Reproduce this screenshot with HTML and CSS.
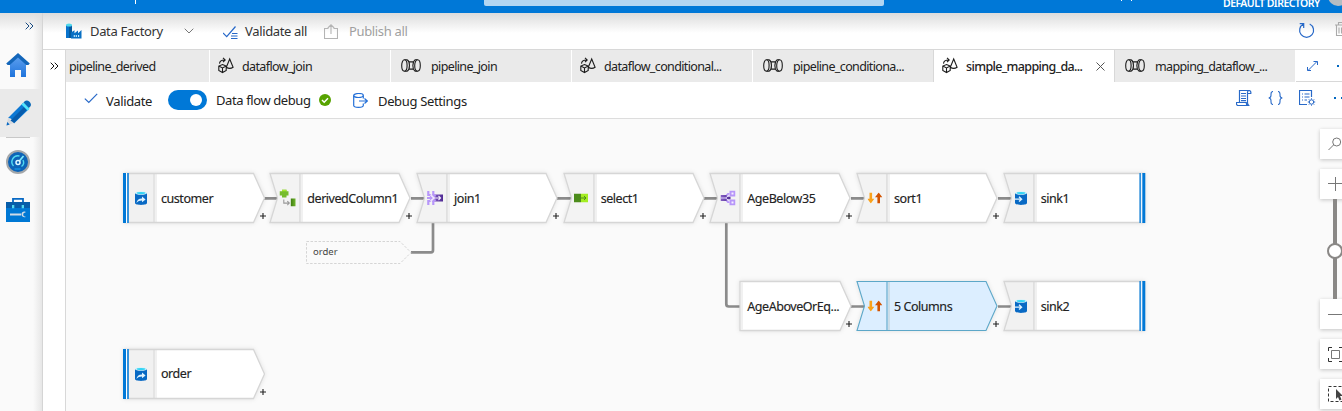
FILE: index.html
```html
<!DOCTYPE html>
<html lang="en">
<head>
<meta charset="utf-8">
<title>Data Factory</title>
<link rel="stylesheet" href="styles.css">
</head>
<body>
<svg class="defs" width="0" height="0">
  <defs>
    <linearGradient id="homeFill" x1="0" y1="0" x2="0" y2="1"><stop offset="0" stop-color="#5ea0ef"/><stop offset="1" stop-color="#1f74dc"/></linearGradient>
    <linearGradient id="leaf" x1="0" x2="1"><stop offset="0" stop-color="#3f7d10"/><stop offset="1" stop-color="#6fb52c"/></linearGradient>
    <linearGradient id="violet" x1="0" x2="1"><stop offset="0" stop-color="#8661c5"/><stop offset="1" stop-color="#4f2a93"/></linearGradient>
    <symbol id="i-chevrons" viewBox="0 0 9 8"><path d="M.7.7 4 4 .7 7.3M4.7.7 8 4 4.7 7.3" fill="none" stroke="currentColor"/></symbol>
    <symbol id="i-flow" viewBox="0 0 17 17"><path d="M5.500 7.500 9.200 9v4.500L5.500 15.500 1.800 13.500V9zM1.800 9l3.700 1.900L9.200 9M5.500 10.900v4.600M12.700 2 9.300 10.200c1.800 1.200 5 1.200 6.800 0zM2.500 6.600C2.700 3.900 4.500 3 7.600 3M6 .8 8.200 3 6 5.200" fill="none" stroke="currentColor" stroke-width="1.100"/></symbol>
    <symbol id="i-pipe" viewBox="0 0 20 13"><g fill="none" stroke="currentColor" stroke-width="1.100"><ellipse cx="3.400" cy="6.500" rx="2.700" ry="5.700"/><path d="M3.500.8h2.800M3.500 12.200h2.800"/><path d="M6.200.8c3 2 3 9.400 0 11.400M8.300 2.900h4.300M8.300 10.100h4.300M13.800.8c-2.600 2.500-2.600 8.900 0 11.400"/><path d="M13.800.8h2.700M13.800 12.200h2.700"/><ellipse cx="16.500" cy="6.500" rx="2.800" ry="5.700"/></g></symbol>
    <symbol id="i-check" viewBox="0 0 14 11"><path d="M.8 5.600 4.800 9.500 13.200.800" fill="none" stroke="currentColor" stroke-width="1.200"/></symbol>
    <symbol id="i-source" viewBox="0 0 12 14"><path d="M0 2v10c0 2.500 12 2.500 12 0V2z" fill="#0869c4"/><ellipse cx="6" cy="2" rx="6" ry="1.700" fill="#d8f3fa"/><ellipse cx="6" cy="2.100" rx="4.500" ry="1.100" fill="#32d4f5"/><path d="M1.500 12C1.800 9 3.600 7.500 7 7.400V5.600l3.600 2.900L7 11.200V9.600C4.500 9.600 3 10.400 1.500 12z" fill="#dff3ff"/></symbol>
    <symbol id="i-sink" viewBox="0 0 12 14"><path d="M0 2v10c0 2.500 12 2.500 12 0V2z" fill="#0869c4"/><ellipse cx="6" cy="2" rx="6" ry="1.700" fill="#d8f3fa"/><ellipse cx="6" cy="2.100" rx="4.500" ry="1.100" fill="#32d4f5"/><path d="M0 8.200h6M4 5.800l2.600 2.400L4 10.600" stroke="#dff3ff" stroke-width="1.300" fill="none"/></symbol>
    <symbol id="i-derive" viewBox="0 0 17 17"><path d="M2.500 0h4.500v1.700H9v4.300H7V8H2.500V6H0V1.700h2.500z" fill="#76bc2d"/><path d="M2.500 0h4.500v1.700H2.500z" fill="#a4e62d"/><path d="M4.300 10v3.600h5M7.800 11.600l2 2-2 2" fill="none" stroke="#999" stroke-width="1.100"/><path d="M11.300 9H16v8h-4.700z" fill="url(#leaf)"/></symbol>
    <symbol id="i-join" viewBox="0 0 16 15"><path d="M5 4H16v7H5L8 7.500z" fill="url(#violet)"/><path d="M1.300.5v4H3l3 3-3 3H1.300v4M6.300.5v3.500L8.500 6M6.300 14.500V11l2.200-2" fill="none" stroke="#b796f9" stroke-width="2.200"/><path d="M0 7.500h5" stroke="#b796f9" stroke-width="1.800"/><path d="m3.500 4.500 3.300 3-3.300 3M6 7.500h7.500M11.500 5.500l2 2-2 2" stroke="#f4edff" stroke-width="1.100" fill="none"/></symbol>
    <symbol id="i-select" viewBox="0 0 14 9"><path d="M0 0h7v9H0z" fill="#4c8c1b"/><path d="M7 0h7v9H7z" fill="#a4ee22"/><path d="M7 4.500h5M10 2.600l2 1.900-2 1.900" stroke="#4c8c1b" fill="none"/></symbol>
    <symbol id="i-split" viewBox="0 0 15 15"><path d="M9 3.300H7.500L5.500 5.500M5.500 9.500l2 2.200H9" fill="none" stroke="#b796f9" stroke-width="1.800"/><path d="M10 1h4v4h-4zM10 10h4v4h-4z" fill="#f5efff" stroke="#b796f9" stroke-width="2"/><path d="M0 4.500h5.500L8 6.200h2v2.600H8l-2.500 1.700H0z" fill="url(#violet)"/><path d="M0 7.500h5L9 4.500M5 7.500l4 3" stroke="#e4d7ff" fill="none"/></symbol>
    <symbol id="i-sort" viewBox="0 0 15 11"><path d="M2 0h2.600v6.200h2.200L3.300 11-.2 6.200H2z" fill="#faa21b"/><path d="M9.900 11h2.600V4.800h2.300L11.200 0 7.500 4.800h2.400z" fill="#d35400"/></symbol>
    <symbol id="i-plus" viewBox="0 0 6 6"><path d="M0 3h6M3 0v6" stroke="#222" stroke-width="1.100"/></symbol>

    <symbol id="s-mid" viewBox="0 0 143 52"><path d="M1 1.500H130L141 26 130 50.500H1L8.500 26z" fill="#fff"/><path d="M1 1.500H31v49H1L8.500 26z" fill="#f3f3f3"/><path d="M33 2v48" stroke="#f1f1f1" stroke-width="2"/><path d="M1 1.500H130L141 26 130 50.500H1L8.500 26zM31 1.500v49" fill="none" stroke="#d6d6d6" stroke-width="1.300"/></symbol>
    <symbol id="s-active" viewBox="0 0 143 52"><path d="M1 1.500H130L141 26 130 50.500H1L8.500 26z" fill="#dceeff"/><path d="M33 2v48" stroke="#cbdde9" stroke-width="2"/><path d="M1 1.500H130L141 26 130 50.500H1L8.500 26zM31 1.500v49" fill="none" stroke="#5ca7c8" stroke-width="1.100"/></symbol>
    <symbol id="s-start" viewBox="0 0 143 52"><path d="M1 1.500H130.500L141.500 26 130.500 50.500H1z" fill="#fff"/><path d="M1 1.500H30v49H1z" fill="#f1f1f1"/><path d="M33 2v48" stroke="#f1f1f1" stroke-width="2"/><path d="M1 1.500H130.500L141.500 26 130.500 50.500H1M31 1.500v49" fill="none" stroke="#d6d6d6" stroke-width="1.300"/><path d="M0 1h3v50H0z" fill="#0078d7"/><path d="M3 1h1v50H3z" fill="#fff"/><path d="M4 1h2v50H4z" fill="#3592dc"/></symbol>
    <symbol id="s-end" viewBox="0 0 143 52"><path d="M1 1.500H142v49H1L8.500 26z" fill="#fff"/><path d="M1 1.500H31v49H1L8.500 26z" fill="#f1f1f1"/><path d="M33 2v48" stroke="#f1f1f1" stroke-width="2"/><path d="M142 1.500H1L8.500 26 1 50.500H142M31 1.500v49" fill="none" stroke="#d6d6d6" stroke-width="1.300"/><path d="M136.300 1h2v50h-2z" fill="#3592dc"/><path d="M138.300 1h1v50h-1z" fill="#fff"/><path d="M139.300 1h3v50h-3z" fill="#0078d7"/></symbol>
    <symbol id="s-branch" viewBox="0 0 143 52"><path d="M31 1.500H131L142 26 131 50.500H31z" fill="#fff" stroke="#d6d6d6" stroke-width="1.300"/><path d="M33 2v48" stroke="#f1f1f1" stroke-width="2"/></symbol>
  </defs>
</svg>
<div class="app">
  <header class="topbar">
    <i class="tick tick-brand"></i><div class="search"></div><i class="tick tick-tools"></i><span class="directory">DEFAULT DIRECTORY</span><span class="avatar"></span>
  </header>
  <div class="body">
    <nav class="rail">
      <div class="rail-expand"><svg width="9" height="8"><use href="#i-chevrons"/></svg></div>
      <div class="rail-item"><svg width="24" height="24" viewBox="0 0 24 24"><path d="M4 10.500 12 3l8 7.500V24H15v-7H9v7H4z" fill="url(#homeFill)"/><path d="M12 0 .2 10.500 1.600 12 3.800 12 12 4.500 20.200 12H22.400L23.800 10.500z" fill="#1366ba"/></svg></div>
      <div class="rail-item is-current"><svg width="26" height="26" viewBox="0 0 26 26"><path d="m2 18-1.500 7.500L8 23z" fill="#d5d9de"/><path d="M.5 25.500 1.200 22 3.700 24.500z" fill="#0869c4"/><path d="M2 18 17 3l6 6L8 23.500C8 21 5 17.500 2 18z" fill="#0c78d4"/><path d="m4.500 20.500 15-15L22.500 8 8 23z" fill="#075cac"/><path d="m15.500 4.500 2-2 6.200 6.200-2 2z" fill="#50e6ff"/><path d="m17.500 2.500 1.500-1.500c1-1 3-.8 4.500.7s2 3.500.8 4.900l-1.500 1.500z" fill="#0869b8"/></svg></div>
      <div class="rail-item after-current"><svg width="24" height="24" viewBox="0 0 24 24"><circle cx="12" cy="12" r="11" fill="#0d64b7" stroke="#a4a7aa" stroke-width="2"/><path d="M13.500 6C7 4.500 3.800 12 7.500 16M17 10c1.200 2.500.5 5-1.500 6.500" fill="none" stroke="#50d8f0" stroke-width="1.400"/><path d="m12.500 12 5-6" stroke="#7ee9fa" stroke-width="1.800"/><circle cx="12" cy="12.500" r="2" fill="#0d64b7" stroke="#e0f9ff" stroke-width="1.500"/><path d="M8.500 19h6" stroke="#1590e0" stroke-width="1.500"/></svg></div>
      <div class="rail-item"><svg width="24" height="24" viewBox="0 0 24 24"><path d="M7 5V.8h10V5" fill="none" stroke="#0869c4" stroke-width="1.800"/><path d="M0 4h24v20H0z" fill="#0078d4"/><path d="M0 4h24v6H0z" fill="#075da9"/><path d="M6 7h2.300v3.300H6zM15.700 7H18v3.300h-2.300z" fill="#50d8f0"/><path d="M4 15.500h11v2H4z" fill="#d0dbe6"/><path d="M19.500 13.800c-4-1.500-6 4.500-1.200 5.500.8 0 1.200-.1 1.500-.5-1.800-.3-2.600-.8-2.600-2.300s1-2 2.300-2.100z" fill="#d0dbe6"/></svg></div>
    </nav>
    <main class="main">
      <div class="toolbar">
        <svg class="factory" width="16" height="16" viewBox="0 0 16 16"><path d="M0 2.200V15h6V2.200z" fill="#0873cc"/><path d="M3 3.500h3V15H3z" fill="#055b9f"/><ellipse cx="3" cy="2" rx="3" ry="1.600" fill="#50d9ec"/><path d="M5 15.500V9.500l3.500-2.200v3L12 7.500v2.800l3.500-3.200v8.400z" fill="#0870c4"/><path d="M8.300 12v2M10.300 12v2M12.600 12v2" stroke="#c7edff" stroke-width="1.100"/></svg>
        <span class="txt t-factory">Data Factory</span>
        <svg class="caret" width="10" height="6" viewBox="0 0 10 6"><path d="m.7.700 4.300 4.300L9.300.700" fill="none" stroke="#777"/></svg>
        <svg class="validate-all" width="15" height="13" viewBox="0 0 15 13"><path d="m0 7 3.700 3.700L12.500.500" fill="none" stroke="#2768c8" stroke-width="1.200"/><path d="M9 7.500h5.500M8 10h6.500M8 12.500h6.500" stroke="#2768c8"/></svg>
        <span class="txt t-validate-all">Validate all</span>
        <svg class="publish" width="14" height="15" viewBox="0 0 14 15"><path d="M4.500 4.500h-4v10h13v-10h-4M7 10V1M3.800 4 7 .8 10.200 4" fill="none" stroke="#b4b4b4" stroke-width="1.100"/></svg>
        <span class="txt t-publish">Publish all</span>
        <svg class="refresh" width="17" height="17" viewBox="0 0 17 17"><path d="M5.500 2A7 7 0 1 0 11.700 2M5.700 6V1.700H1.700" fill="none" stroke="#2869c8" stroke-width="1.200"/></svg>
        <svg class="trash" width="10" height="14" viewBox="0 0 10 14"><path d="M0 3h10M3.500 3V.5H10M1.500 3v10.500H10M4 5.500v6M6.500 5.500v6M9 5.500v6" fill="none" stroke="#aaa" stroke-width="1.100"/></svg>
      </div>
      <div class="workspace">
        <aside class="side-expand"><svg width="9" height="8"><use href="#i-chevrons"/></svg></aside>
        <section class="editor">
          <div class="tabs">
            <div class="tab tab-first"><span class="txt t-pd">pipeline_derived</span></div>
            <div class="tab"><svg class="ti" width="17" height="17"><use href="#i-flow"/></svg><span class="txt t-dj">dataflow_join</span></div>
            <div class="tab"><svg class="ti ti-pipe" width="20" height="13"><use href="#i-pipe"/></svg><span class="txt t-pj">pipeline_join</span></div>
            <div class="tab"><svg class="ti" width="17" height="17"><use href="#i-flow"/></svg><span class="txt t-dc">dataflow_conditional...</span></div>
            <div class="tab before-active"><svg class="ti ti-pipe" width="20" height="13"><use href="#i-pipe"/></svg><span class="txt t-pc">pipeline_conditiona...</span></div>
            <div class="tab active"><svg class="ti" width="17" height="17"><use href="#i-flow"/></svg><span class="txt t-sm">simple_mapping_da...</span><svg class="close" width="9" height="9" viewBox="0 0 9 9"><path d="m.5.500 8 8m0-8-8 8" stroke="#555"/></svg></div>
            <div class="tab tab-last"><svg class="ti ti-pipe" width="20" height="13"><use href="#i-pipe"/></svg><span class="txt t-md">mapping_dataflow_...</span></div>
            <div class="tab-tools"><svg width="11" height="10" viewBox="0 0 11 10"><path d="M1 9.500 10 .5M6.500.5H10.500V4M.5 6v3.500H4" fill="none" stroke="#2869c8"/></svg><i class="dot"></i></div>
          </div>
          <div class="commands">
            <svg class="c-check" width="14" height="11"><use href="#i-check"/></svg>
            <span class="txt t-validate">Validate</span>
            <span class="toggle"></span>
            <span class="txt t-debug">Data flow debug</span>
            <svg class="ok" width="12" height="12" viewBox="0 0 12 12"><circle cx="6" cy="6" r="6" fill="#57a300"/><path d="m3 6 2.200 2.200L9 4.300" fill="none" stroke="#fff" stroke-width="1.500"/></svg>
            <svg class="db" width="15" height="15" viewBox="0 0 15 15"><ellipse cx="5.500" cy="2.500" rx="4.800" ry="2" fill="none" stroke="#2470d8" stroke-width="1.200"/><path d="M.7 2.500v10c0 2.500 9.600 2.500 9.600 0v-2M10.300 2.500v3M6 8h8M11.500 5.500 14.300 8l-2.800 2.500" fill="none" stroke="#2470d8" stroke-width="1.200"/></svg>
            <span class="txt t-settings">Debug Settings</span>
            <div class="right-tools">
              <svg width="16" height="16" viewBox="0 0 16 16"><path d="M3.500 12V.5h9.300c-1.500.5-1.500 1.500-1.300 3v9c0 2.200 1 2.500 1.300 3H2C.6 15.500.3 14 .5 12.500h9.700c0 1.500.5 3 2 3M12.800.5c2 0 2.200 1.500 2 3h-3M5 3.500h5M5 6h5M5 8.500h5M5 10.700h5" fill="none" stroke="#2869c8" stroke-width="1.200"/></svg>
              <svg width="15" height="14" viewBox="0 0 15 14"><path d="M5 .5C3 .5 3 1.500 3 3v1.500C3 6 2.300 6.800.7 7 2.300 7.200 3 8 3 9.500V11c0 1.500 0 2.500 2 2.500M10 .5c2 0 2 1 2 2.500v1.500c0 1.500.7 2.300 2.300 2.500C12.700 7.200 12 8 12 9.500V11c0 1.500 0 2.500-2 2.500" fill="none" stroke="#2869c8" stroke-width="1.100"/></svg>
              <svg width="17" height="16" viewBox="0 0 17 16"><path d="M8 14.500H.5V.5h12V7M3 4h1M5.500 4h5M3 7h1M5.500 7h5M3 10h1M5.500 10H8" fill="none" stroke="#2869c8" stroke-width="1.200"/><circle cx="12.500" cy="12" r="2.200" fill="#fff" stroke="#2869c8"/><path d="M12.500 8.300v1.200m0 5v1.200M8.800 12H10m5 0h1.200m-6.300-2.600.8.800m3.600 3.600.8.800m0-5.200-.8.800m-3.600 3.600-.8.800" stroke="#2869c8"/></svg>
              <span class="dots"><i class="dot"></i><i class="dot"></i></span>
            </div>
          </div>
          <div class="canvas">
            <svg class="edges" width="1276" height="292" viewBox="66 119 1276 292"><path d="M264 198.300h15M411 198.300h14M557 198.300h15M704 198.300h15M851 198.300h14M998 198.300h14M851 306.500h14M998 306.500h14M411 252.300h20q2 0 2-2V223M726.300 223v81q0 2.500 2.500 2.500H740" fill="none" stroke="#8b8b8b" stroke-width="2.700"/><path d="M306.500 241.500H400L411 252.500 400 263.500H306.500z" fill="none" stroke="#d5d5d5" stroke-dasharray="2.500 1.500"/></svg>
            <span class="ref-label">order</span>
            <div class="node col0 row1"><svg class="shape"><use href="#s-start"/></svg><svg class="icon" width="12" height="14"><use href="#i-source"/></svg><span class="txt n-customer">customer</span><svg class="add"><use href="#i-plus"/></svg></div>
            <div class="node col1 row1"><svg class="shape"><use href="#s-mid"/></svg><svg class="icon" width="17" height="17"><use href="#i-derive"/></svg><span class="txt n-derived">derivedColumn1</span><svg class="add"><use href="#i-plus"/></svg></div>
            <div class="node col2 row1"><svg class="shape"><use href="#s-mid"/></svg><svg class="icon" width="16" height="15"><use href="#i-join"/></svg><span class="txt n-join">join1</span><svg class="add"><use href="#i-plus"/></svg></div>
            <div class="node col3 row1"><svg class="shape"><use href="#s-mid"/></svg><svg class="icon" width="14" height="9"><use href="#i-select"/></svg><span class="txt n-select">select1</span><svg class="add"><use href="#i-plus"/></svg></div>
            <div class="node col4 row1"><svg class="shape"><use href="#s-mid"/></svg><svg class="icon" width="15" height="15"><use href="#i-split"/></svg><span class="txt n-below">AgeBelow35</span><svg class="add"><use href="#i-plus"/></svg></div>
            <div class="node col5 row1"><svg class="shape"><use href="#s-mid"/></svg><svg class="icon" width="15" height="11"><use href="#i-sort"/></svg><span class="txt n-sort">sort1</span><svg class="add"><use href="#i-plus"/></svg></div>
            <div class="node col6 row1"><svg class="shape"><use href="#s-end"/></svg><svg class="icon" width="12" height="14"><use href="#i-sink"/></svg><span class="txt n-sink">sink1</span></div>
            <div class="node col4 row2"><svg class="shape"><use href="#s-branch"/></svg><span class="txt n-above">AgeAboveOrEq...</span><svg class="add"><use href="#i-plus"/></svg></div>
            <div class="node col5 row2 selected"><svg class="shape"><use href="#s-active"/></svg><svg class="icon" width="15" height="11"><use href="#i-sort"/></svg><span class="txt n-columns">5 Columns</span><svg class="add"><use href="#i-plus"/></svg></div>
            <div class="node col6 row2"><svg class="shape"><use href="#s-end"/></svg><svg class="icon" width="12" height="14"><use href="#i-sink"/></svg><span class="txt n-sink">sink2</span></div>
            <div class="node col0 row3"><svg class="shape"><use href="#s-start"/></svg><svg class="icon" width="12" height="14"><use href="#i-source"/></svg><span class="txt n-order">order</span><svg class="add"><use href="#i-plus"/></svg></div>
            <div class="zoom-tools">
              <div class="zbtn"><svg width="14" height="14" viewBox="0 0 14 14"><circle cx="8.700" cy="5" r="4" fill="none" stroke="#777"/><path d="m5.500 8-5 5" stroke="#777"/></svg></div>
              <div class="zbtn z-in"><svg width="14" height="14" viewBox="0 0 14 14"><path d="M0 6.500h14M7.500 0v14" stroke="#777"/></svg></div>
              <div class="track"><i class="knob"></i></div>
              <div class="zbtn z-out"><svg width="14" height="14" viewBox="0 0 14 14"><path d="M0 7.500h14" stroke="#777"/></svg></div>
              <div class="zbtn"><svg width="15" height="15" viewBox="0 0 15 15"><path d="M.5 4V.5H4M11 .5h3.500V4M.5 11v3.500H4M11 14.500h3.500V11" fill="none" stroke="#333"/><path d="M3.500 3.500h8v8h-8z" fill="none" stroke="#777"/></svg></div>
              <div class="zbtn"><svg width="16" height="16" viewBox="0 0 16 16"><path d="M.5.5h15v15H.5z" fill="none" stroke="#333" stroke-dasharray="3 2"/><path d="m8 3 7 7h-3l1.500 3.500-2 1L10 11l-2 2z" fill="#444"/></svg></div>
            </div>
          </div>
        </section>
      </div>
    </main>
  </div>
</div>
</body>
</html>
```
FILE: styles.css
```css
* { box-sizing: border-box; }
body { margin: 0; font-family: "Noto Sans", "Open Sans", sans-serif; font-size: 13px; color: #222; }
svg { display: block; flex: none; }
.defs { position: absolute; }
.app { width: 1342px; height: 411px; overflow: hidden; display: flex; flex-direction: column; background: #fff; }

.topbar { height: 13px; flex: none; display: flex; background: #0078d7; color: #fff; }
.topbar > * { flex: none; }
.tick { height: 4px; border-left: 1px solid #fff; }
.tick-brand { margin-left: 135px; width: 349px; }
.search { width: 400px; height: 6px; background: #b3d6f2; border-radius: 0 0 2px 2px; }
.tick-tools { height: 1px; margin-left: 237px; width: 11px; border-right: 1px solid #fff; }
.directory { margin-left: 91px; width: 99px; font: 600 10.500px/7px "Noto Sans", sans-serif; letter-spacing: -.55px; white-space: nowrap; }
.avatar { width: 20px; height: 20px; margin: -14px 0 0 6px; border-radius: 50%; background: #b5bcc2; }

.body { flex: 1; display: flex; min-height: 0; background: linear-gradient(#dcdcdc, #fff 20px); }
.rail { width: 43px; flex: none; border-right: 1px solid #d5d5d5; background: linear-gradient(#dedede, transparent 18px), linear-gradient(90deg, #fafafa 33px, #e7e7e7); }
.rail-expand { height: 28px; padding: 9px 0 0 25px; color: #174a80; }
.rail-item { height: 48px; padding-left: 6px; display: flex; align-items: center; }
.rail-item.is-current { background: #eaeaea; position: relative; }
.rail-item.is-current::after { content: ""; position: absolute; left: 6px; top: 48px; width: 24px; height: 1px; background: #c8c8c8; }
.rail-item.after-current { margin-top: 1px; }

.main { flex: 1; min-width: 0; display: flex; flex-direction: column; }
.toolbar { height: 37px; flex: none; padding-left: 23px; display: flex; align-items: center; border-bottom: 1px solid #d8d8d8; }
.txt { white-space: nowrap; flex: none; line-height: 18px; letter-spacing: -.35px; }
.toolbar .txt { color: #333; }
.t-factory { width: 94px; margin-left: 8px; }
.caret { margin-right: 29px; }
.t-validate-all { width: 72px; margin-left: 7px; }
.validate-all { margin-top: 2px; }
.publish { margin: 0 11px 0 7px; }
.toolbar .t-publish { color: #a0a0a0; width: 60px; }
.refresh { margin-left: 889px; margin-top: -2px; }
.trash { margin: -4px 0 0 20px; }

.workspace { flex: 1; display: flex; min-height: 0; }
.side-expand { width: 23px; flex: none; background: #fff; border-right: 1px solid #d8d8d8; padding: 12px 0 0 7px; color: #111; }
.editor { flex: 1; min-width: 0; display: flex; flex-direction: column; }
.tabs { height: 32px; flex: none; display: flex; background: #fff; }
.tab { width: 181px; flex: none; display: flex; align-items: center; background: #eaeaea; border-right: 1px solid #fff; padding-left: 7px; }
.tab-first { width: 144px; padding-left: 3px; }
.tab .txt { padding-top: 2px; font-size: 12.500px; letter-spacing: -.63px; }
.ti { margin-top: -2px; margin-right: 8px; color: #1c1c1c; }
.ti-pipe { margin: -1px 10px 0 3px; }
.tab.before-active { border-right-color: #d8d8d8; }
.tab.active { background: #fff; border-right-color: #d8d8d8; }
.t-sm { width: 130px; font-weight: 500; }
.tab-tools { flex: 1; display: flex; align-items: center; padding-left: 11px; border-bottom: 1px solid #d8d8d8; }
.dot { width: 2px; height: 2px; background: #0067c0; display: block; flex: none; }
.tab-tools .dot { margin-left: 19px; }

.commands { height: 37px; flex: none; display: flex; align-items: center; background: #fff; border-bottom: 1px solid #ddd; padding-left: 18px; }
.c-check { color: #2869c8; margin: -3px 8px 0 0; }
.t-validate { width: 62px; padding-top: 2px; }
.toggle { width: 40px; height: 20px; border-radius: 10px; background: #0078d7; padding: 4px 5px 0 22px; }
.toggle::after { content: ""; display: block; width: 12px; height: 12px; border-radius: 50%; background: #fff; }
.t-debug { width: 103px; margin-left: 9px; }
.commands .t-debug { letter-spacing: -.4px; }
.db { margin: 0 10px 0 22px; }
.t-settings { padding-top: 2px; width: 90px; }
.right-tools { margin-left: 768px; display: flex; align-items: center; gap: 16px; margin-top: -4px; }
.dots { display: flex; gap: 5px; margin-left: 2px; }

.canvas { flex: 1; background: #fafafa; position: relative; overflow: hidden; }
.edges { position: absolute; left: 0; top: 0; }
.ref-label { position: absolute; left: 247px; top: 126px; font-size: 9.500px; line-height: 14px; color: #444; }
.node { position: absolute; width: 143px; height: 52px; display: flex; align-items: center; }
.shape { position: absolute; left: 0; top: 0; width: 143px; height: 52px; overflow: visible; filter: drop-shadow(0 0 2px rgba(0,0,0,.1)); }
.icon { position: absolute; left: 18.700px; top: 26px; transform: translate(-50%, -50%); }
.col0 .icon { left: 18px; }
.node .txt { position: relative; left: 38px; top: .400px; font-size: 12.500px; letter-spacing: -.45px; -webkit-text-stroke: .15px; }
.add { position: absolute; left: 137px; top: 40.500px; width: 6px; height: 6px; }
.col0 { left: 57px; }
.col1 { left: 203.300px; }
.col2 { left: 350px; }
.col3 { left: 496.700px; }
.col4 { left: 643.300px; }
.col5 { left: 790px; }
.col6 { left: 936.700px; }
.row1 { top: 53.300px; }
.row2 { top: 161.400px; }
.row3 { top: 229px; }

.zoom-tools { position: absolute; left: 1254px; top: 10px; width: 30px; display: flex; flex-direction: column; gap: 10px; }
.zbtn { height: 30px; padding-left: 8px; display: flex; align-items: center; background: #fff; box-shadow: 0 1px 4px rgba(0,0,0,.22); }
.z-in, .track { margin-bottom: -10px; }
.track { height: 100px; width: 4px; margin-left: 13px; background: #8a8886; position: relative; }
.knob { position: absolute; left: -6px; top: 44px; width: 16px; height: 16px; border-radius: 50%; background: #fff; border: 2px solid #8a8886; }
```
